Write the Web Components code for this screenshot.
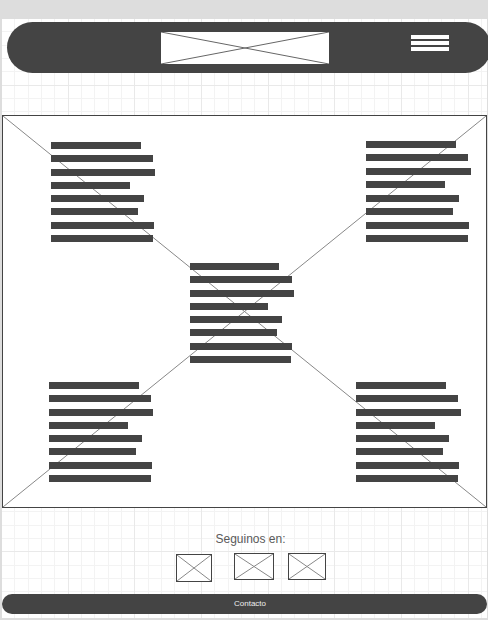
<!DOCTYPE html>
<html lang="es">
<head>
<meta charset="utf-8">
<meta name="viewport" content="width=device-width, initial-scale=1">
<title>Wireframe</title>
<style>
  html, body { margin: 0; min-height: 100%; background: #ddd; }
  body { font-family: "Liberation Sans", Arial, sans-serif; overflow-x: hidden; }
</style>
</head>
<body>
<wire-page></wire-page>
<script>
  const define = (name, html, setup) => {
    const template = document.createElement('template');
    template.innerHTML = html;
    customElements.define(name, class extends HTMLElement {
      constructor() {
        super();
        this.attachShadow({ mode: 'open' }).append(template.content.cloneNode(true));
      }
      connectedCallback() { if (setup) setup(this, this.shadowRoot); }
    });
  };

  // Box crossed by its two diagonals; slotted content lies over the cross.
  define('wire-image', `
    <style>
      :host { display: grid; box-sizing: border-box; background: #fff; border: 1px solid #444; }
      :host([plain]) { border: 0; }
      svg, .content { grid-area: 1 / 1; min-width: 0; min-height: 0; }
      svg { display: block; width: 100%; height: 100%; contain: size; }
      line { stroke: #888; vector-effect: non-scaling-stroke; }
      :host([plain]) line { stroke: #666; }
      .content { position: relative; }
    </style>
    <svg viewBox="0 0 100 100" preserveAspectRatio="none" aria-hidden="true">
      <line x1="0" y1="0" x2="100" y2="100"/><line x1="100" y1="0" x2="0" y2="100"/>
    </svg>
    <div class="content"><slot></slot></div>`);

  // Paragraph placeholder: one bar for each width in the "lines" attribute.
  define('wire-text', `
    <style>
      :host { display: flex; flex-direction: column; justify-content: space-between; height: 100px; }
      :host([tall]) { height: 101px; }
      span { display: block; height: 7px; background: #444; }
    </style>`, (host, root) => {
      if (root.querySelector('span')) return;
      for (const width of host.getAttribute('lines').split(' ')) {
        const bar = document.createElement('span');
        bar.style.width = width + 'px';
        root.append(bar);
      }
    });

  define('wire-menu', `
    <style>
      :host { display: block; }
      button { display: flex; flex-direction: column; gap: 2px; width: 38px; padding: 0; border: 0; background: none; cursor: pointer; }
      i { display: block; width: 100%; height: 4px; background: #fff; }
    </style>
    <button type="button" aria-label="Menú"><i></i><i></i><i></i></button>`);

  define('wire-header', `
    <style>
      :host { display: block; }
      header { display: grid; grid-template-columns: 1fr 168px 1fr; box-sizing: border-box; height: 51px; padding: 10px 42px 9px 34px; border-radius: 26px; background: #444; }
      .logo { grid-column: 2; }
      wire-menu { justify-self: end; padding-top: 3px; }
    </style>
    <header><wire-image plain class="logo"></wire-image><wire-menu></wire-menu></header>`);

  define('wire-hero', `
    <style>
      :host { display: block; }
      .rows { display: flex; flex-direction: column; padding: 25px 0; }
      .row { display: flex; justify-content: space-between; align-items: flex-end; }
      .top { padding: 0 15px 0 48px; }
      .middle { justify-content: center; padding: 21px 5px 19px 0; }
      .bottom { padding: 0 25px 0 46px; }
    </style>
    <wire-image>
      <div class="rows">
        <div class="row top">
          <wire-text lines="90 102 104 79 93 87 103 102"></wire-text>
          <wire-text tall lines="90 102 105 79 93 87 103 102"></wire-text>
        </div>
        <div class="row middle"><wire-text lines="89 102 104 78 92 87 102 101"></wire-text></div>
        <div class="row bottom">
          <wire-text lines="90 102 104 79 93 87 103 102"></wire-text>
          <wire-text lines="90 102 105 79 93 87 103 102"></wire-text>
        </div>
      </div>
    </wire-image>`);

  define('wire-social', `
    <style>
      :host { display: block; color: #5a5a5a; }
      h2 { margin: 0; padding-left: 12px; font-size: 12px; line-height: 16px; font-weight: 400; text-align: center; }
      nav { display: flex; justify-content: center; align-items: flex-start; gap: 14px; padding: 6px 0 0 13px; }
      a { display: block; }
      wire-image { width: 38px; height: 27px; }
      .first { padding: 1px 8px 0 0; }
      .first wire-image { width: 36px; height: 28px; }
      .second wire-image { width: 40px; }
    </style>
    <h2>Seguinos en:</h2>
    <nav>
      <a class="first" href="#" aria-label="Red social 1"><wire-image></wire-image></a>
      <a class="second" href="#" aria-label="Red social 2"><wire-image></wire-image></a>
      <a href="#" aria-label="Red social 3"><wire-image></wire-image></a>
    </nav>`);

  define('wire-footer', `
    <style>
      :host { display: block; }
      footer { border-radius: 10px; background: #444; font-size: 8px; line-height: 20px; text-align: center; padding-left: 11px; }
      a { color: #eee; text-decoration: none; }
    </style>
    <footer><a href="#"><slot></slot></a></footer>`);

  // Sheet with squared paper behind the sections.
  define('wire-page', `
    <style>
      :host { display: block; padding: 19px 1px 2px 2px; }
      .sheet { display: grid; background: #fff; }
      .grid { grid-area: 1 / 1; width: 100%; height: 100%; contain: size; }
      .body { grid-area: 1 / 1; position: relative; min-width: 0; padding: 3px 0 4px; }
      wire-header { margin: 0 -4px 0 5px; }
      wire-hero { margin-top: 42px; }
      wire-social { margin-top: 23px; }
      wire-footer { margin-top: 12px; }
    </style>
    <div class="sheet">
      <svg class="grid" aria-hidden="true">
        <defs>
          <pattern id="paper" x="-1" y="-1" width="200" height="200" patternUnits="userSpaceOnUse">
            <g id="minor" fill="#f3f3f3"></g><g id="major" fill="#e9e9e9"></g>
          </pattern>
        </defs>
        <rect width="100%" height="100%" fill="url(#paper)"/>
      </svg>
      <div class="body">
        <wire-header></wire-header>
        <main><wire-hero></wire-hero><wire-social></wire-social></main>
        <wire-footer>Contacto</wire-footer>
      </div>
    </div>`, (host, root) => {
      for (let i = 0; i < 15; i++) {
        const at = Math.round(i * 200 / 15);
        const group = root.getElementById(i % 5 ? 'minor' : 'major');
        for (const box of [[at, 0, 1, 200], [0, at, 200, 1]]) {
          const rect = document.createElementNS('http://www.w3.org/2000/svg', 'rect');
          ['x', 'y', 'width', 'height'].forEach((key, n) => rect.setAttribute(key, box[n]));
          group.append(rect);
        }
      }
    });
</script>
</body>
</html>
